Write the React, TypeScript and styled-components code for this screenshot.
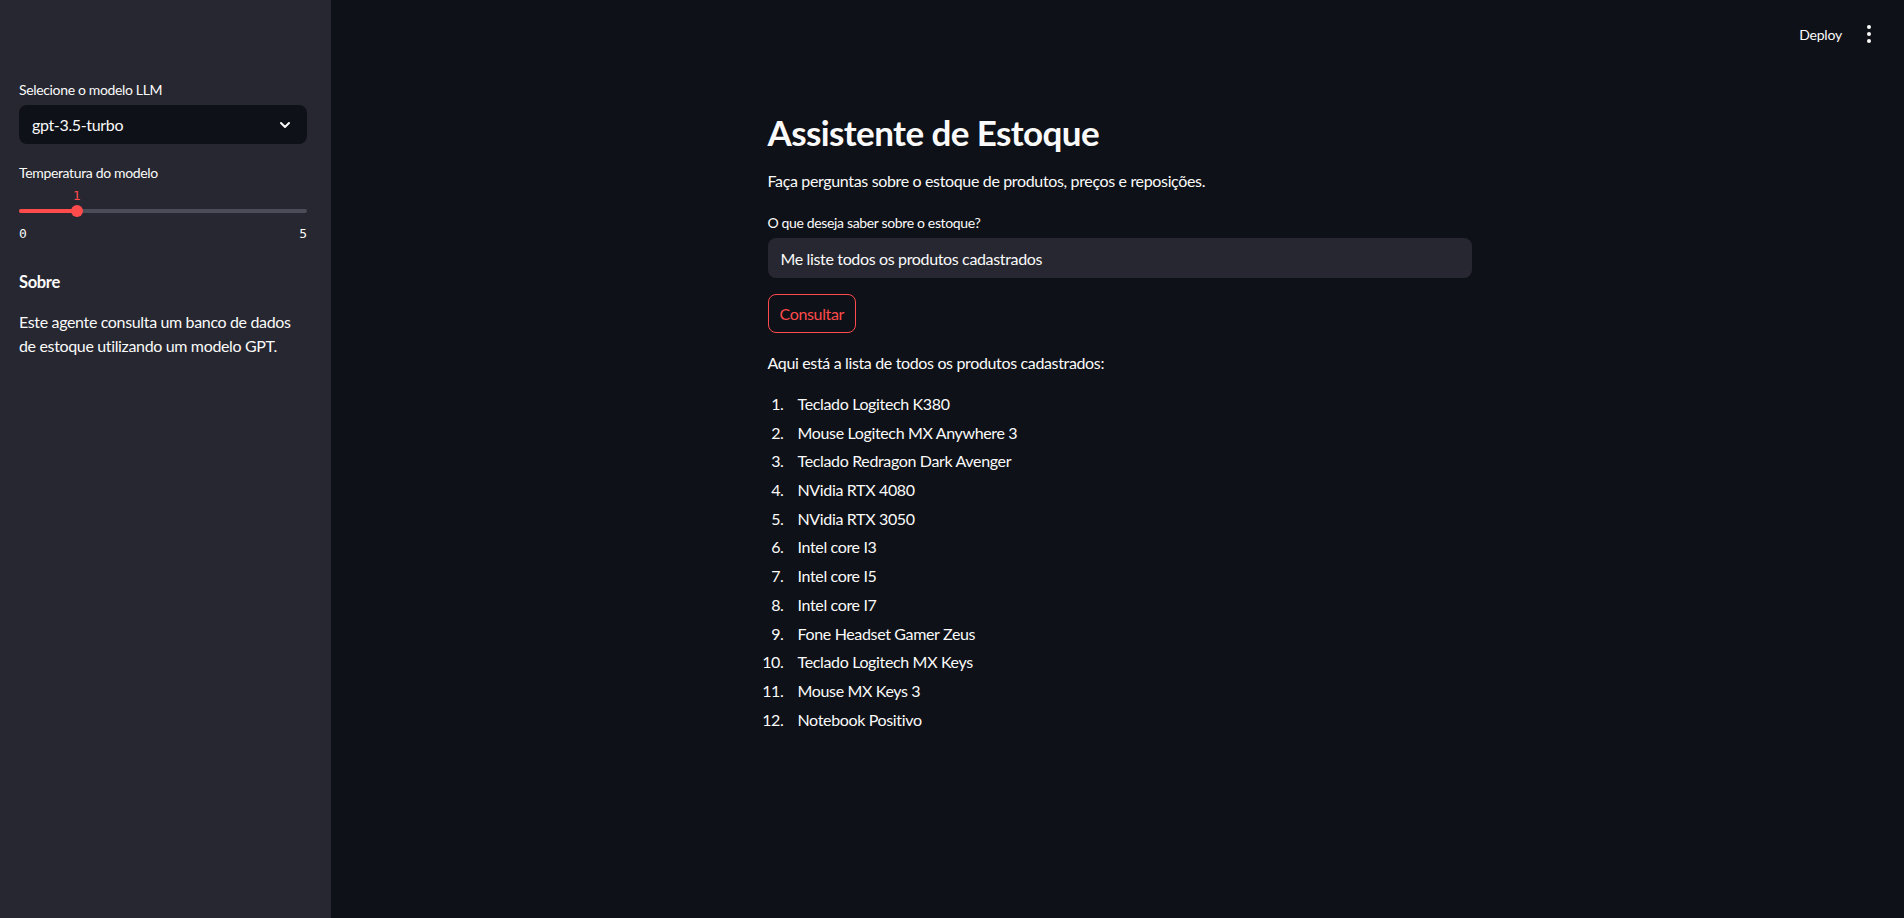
import { styled, createGlobalStyle } from 'styled-components'

const GlobalStyle = createGlobalStyle`
  body {
    margin: 0;
    background: #0e1117;
    color: #fafafa;
    font-family: Lato, "Noto Sans", sans-serif;
    letter-spacing: -0.35px;
  }
`

const Page = styled.div`
  display: flex;
  min-height: 100vh;
`

const Sidebar = styled.aside`
  width: 331px;
  flex-shrink: 0;
  background: #262730;
  padding: 77px 24px 0 19px;
  box-sizing: border-box;
  display: flex;
  flex-direction: column;
`

const FieldLabel = styled.label`
  display: flex;
  align-items: center;
  height: 24px;
  font-size: 14px;
  margin-bottom: 4px;
  color: #fafafa;
`

const Select = styled.div`
  height: 39px;
  border-radius: 8px;
  background: #0e1117;
  display: flex;
  align-items: center;
  justify-content: space-between;
  padding: 0 14px 0 13px;
  font-size: 16px;
  margin-bottom: 16px;
`

const SliderBlock = styled.div`
  display: flex;
  flex-direction: column;
`

const ValueRow = styled.div`
  position: relative;
  height: 15px;
`

const ValueTag = styled.span`
  position: absolute;
  top: 0;
  transform: translateX(-50%);
  font-family: "DejaVu Sans Mono", "Liberation Mono", monospace;
  font-size: 13px;
  line-height: 15px;
  letter-spacing: 0;
  color: #ff4b4b;
`

const Track = styled.div`
  position: relative;
  height: 4px;
  margin: 6px 0;
  border-radius: 2px;
  background: #4a4c57;
`

const Fill = styled.div`
  position: absolute;
  left: 0;
  top: 0;
  bottom: 0;
  border-radius: 2px;
  background: #ff4b4b;
`

const Thumb = styled.div`
  position: absolute;
  top: 50%;
  width: 12px;
  height: 12px;
  border-radius: 50%;
  background: #ff4b4b;
  transform: translate(-50%, -50%);
`

const TickRow = styled.div`
  display: flex;
  justify-content: space-between;
  margin-top: 6px;
  font-family: "DejaVu Sans Mono", "Liberation Mono", monospace;
  font-size: 13px;
  line-height: 18px;
  letter-spacing: 0;
  color: #fafafa;
`

const SideHeading = styled.h3`
  margin: 25px 0 0;
  font-size: 16.5px;
  line-height: 28px;
  font-weight: 700;
`

const SideText = styled.p`
  margin: 14px 0 0;
  font-size: 16px;
  line-height: 24px;
`

const Main = styled.main`
  flex: 1;
  display: flex;
  flex-direction: column;
`

const Toolbar = styled.header`
  height: 68px;
  display: flex;
  align-items: center;
  justify-content: flex-end;
  gap: 25px;
  padding-right: 33px;
`

const DeployButton = styled.button`
  background: none;
  border: none;
  color: #fafafa;
  font-family: inherit;
  font-size: 14px;
  letter-spacing: -0.2px;
  padding: 0;
  cursor: pointer;
`

const MenuDots = styled.div`
  display: flex;
  flex-direction: column;
  gap: 3px;
  span {
    width: 4px;
    height: 4px;
    border-radius: 50%;
    background: #fafafa;
  }
`

const Content = styled.section`
  width: 704px;
  margin: 0 auto;
  display: flex;
  flex-direction: column;
  align-items: flex-start;
  transform: translateX(2px);
`

const Title = styled.h1`
  margin: 38px 0 0;
  font-size: 35px;
  line-height: 52px;
  font-weight: 700;
  letter-spacing: -0.6px;
`

const Text = styled.p<{ $top: number }>`
  margin: ${p => p.$top}px 0 0;
  font-size: 16px;
  line-height: 24px;
`

const InputLabel = styled(FieldLabel)`
  margin-top: 17px;
`

const TextInput = styled.div`
  width: 100%;
  box-sizing: border-box;
  height: 40px;
  border-radius: 8px;
  background: #262730;
  display: flex;
  align-items: center;
  padding: 0 13px;
  font-size: 16px;
`

const ConsultButton = styled.button`
  margin-top: 16px;
  height: 39px;
  padding: 0 11px;
  border-radius: 8px;
  border: 1px solid #ff4b4b;
  background: #0e1117;
  color: #ff4b4b;
  font-family: inherit;
  font-size: 16px;
  letter-spacing: -0.35px;
  cursor: pointer;
`

const List = styled.ol`
  margin: 17px 0 0;
  padding-left: 30px;
  list-style: none;
  counter-reset: item;
  font-size: 16px;
  line-height: 24px;
`

const Item = styled.li`
  position: relative;
  margin-bottom: 4.7px;
  counter-increment: item;
  &::before {
    content: counter(item) ".";
    position: absolute;
    right: 100%;
    margin-right: 14px;
  }
`

const produtos = [
  'Teclado Logitech K380',
  'Mouse Logitech MX Anywhere 3',
  'Teclado Redragon Dark Avenger',
  'NVidia RTX 4080',
  'NVidia RTX 3050',
  'Intel core I3',
  'Intel core I5',
  'Intel core I7',
  'Fone Headset Gamer Zeus',
  'Teclado Logitech MX Keys',
  'Mouse MX Keys 3',
  'Notebook Positivo',
]

function App() {
  const temp = 1
  const pct = (temp / 5) * 100
  return (
    <Page>
      <GlobalStyle />
      <Sidebar>
        <FieldLabel>Selecione o modelo LLM</FieldLabel>
        <Select>
          gpt-3.5-turbo
          <svg width="16" height="16" viewBox="0 0 24 24" fill="none" stroke="#fafafa" strokeWidth="3" strokeLinecap="round" strokeLinejoin="round">
            <path d="M6 9l6 6 6-6" />
          </svg>
        </Select>
        <FieldLabel>Temperatura do modelo</FieldLabel>
        <SliderBlock>
          <ValueRow>
            <ValueTag style={{ left: `${pct}%` }}>{temp}</ValueTag>
          </ValueRow>
          <Track>
            <Fill style={{ width: `${pct}%` }} />
            <Thumb style={{ left: `${pct}%` }} />
          </Track>
          <TickRow>
            <span>0</span>
            <span>5</span>
          </TickRow>
        </SliderBlock>
        <SideHeading>Sobre</SideHeading>
        <SideText>Este agente consulta um banco de dados de estoque utilizando um modelo GPT.</SideText>
      </Sidebar>
      <Main>
        <Toolbar>
          <DeployButton>Deploy</DeployButton>
          <MenuDots>
            <span />
            <span />
            <span />
          </MenuDots>
        </Toolbar>
        <Content>
          <Title>Assistente de Estoque</Title>
          <Text $top={11}>Faça perguntas sobre o estoque de produtos, preços e reposições.</Text>
          <InputLabel>O que deseja saber sobre o estoque?</InputLabel>
          <TextInput>Me liste todos os produtos cadastrados</TextInput>
          <ConsultButton>Consultar</ConsultButton>
          <Text $top={18}>Aqui está a lista de todos os produtos cadastrados:</Text>
          <List>
            {produtos.map(p => (
              <Item key={p}>{p}</Item>
            ))}
          </List>
        </Content>
      </Main>
    </Page>
  )
}

export default App
